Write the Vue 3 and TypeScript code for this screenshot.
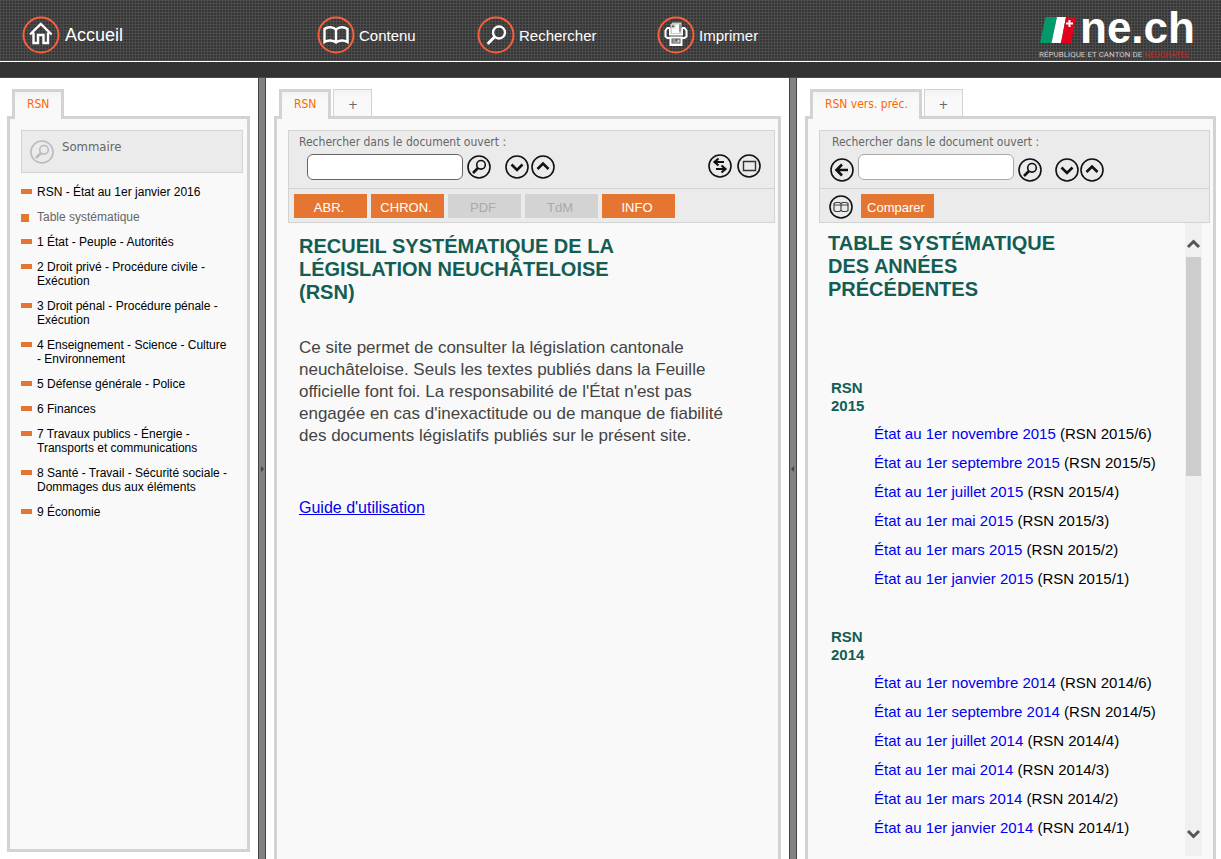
<script setup lang="ts">
import { ref } from 'vue'

interface TocEntry {
  label: string
  current?: boolean
}

interface Version {
  label: string
  code: string
}

interface VersionGroup {
  year: number
  versions: Version[]
}

const toc: TocEntry[] = [
  { label: 'RSN - État au 1er janvier 2016' },
  { label: 'Table systématique', current: true },
  { label: '1 État - Peuple - Autorités' },
  { label: '2 Droit privé - Procédure civile - Exécution' },
  { label: '3 Droit pénal - Procédure pénale - Exécution' },
  { label: '4 Enseignement - Science - Culture - Environnement' },
  { label: '5 Défense générale - Police' },
  { label: '6 Finances' },
  { label: '7 Travaux publics - Énergie - Transports et communications' },
  { label: '8 Santé - Travail - Sécurité sociale - Dommages dus aux éléments' },
  { label: '9 Économie' },
]

const months = ['novembre', 'septembre', 'juillet', 'mai', 'mars', 'janvier']

const groups: VersionGroup[] = [2015, 2014].map((year) => ({
  year,
  versions: months.map((month, i) => ({
    label: `État au 1er ${month} ${year}`,
    code: `(RSN ${year}/${months.length - i})`,
  })),
}))

const actions = [
  { label: 'ABR.', enabled: true },
  { label: 'CHRON.', enabled: true },
  { label: 'PDF', enabled: false },
  { label: 'TdM', enabled: false },
  { label: 'INFO', enabled: true },
]

const mainQuery = ref('')
const previousQuery = ref('')
</script>

<template>
  <div class="page">
    <header class="header">
      <nav class="nav">
        <a class="nav-item home" href="#">
          <svg class="nav-icon" viewBox="0 0 38 38" aria-hidden="true">
            <circle class="ring" cx="19" cy="19" r="17.5" />
            <path class="glyph" d="M8 18.5 18.8 8 29.6 18.5M11.5 16.5V27h4.500v-8h5.500v8h4.500V16.500" />
          </svg>
          <span>Accueil</span>
        </a>
        <a class="nav-item" href="#">
          <svg class="nav-icon" viewBox="0 0 38 38" aria-hidden="true">
            <circle class="ring" cx="19" cy="19" r="17.5" />
            <path class="glyph" d="M19 13.500C16 10.500 10.500 10.500 7.500 13v13c3.500-2.200 8.500-2 11.500.5 3-2.500 8-2.700 11.500-.5V13c-3-2.500-8.500-2.500-11.500.5zV26" />
          </svg>
          <span>Contenu</span>
        </a>
        <a class="nav-item" href="#">
          <svg class="nav-icon" viewBox="0 0 38 38" aria-hidden="true">
            <circle class="ring" cx="19" cy="19" r="17.5" />
            <circle class="glyph" cx="22" cy="16.500" r="6" />
            <path class="glyph thick" d="M17.500 21 11.500 27" />
          </svg>
          <span>Rechercher</span>
        </a>
        <a class="nav-item" href="#">
          <svg class="nav-icon" viewBox="0 0 38 38" aria-hidden="true">
            <circle class="ring" cx="19" cy="19" r="17.5" />
            <path class="glyph thin" d="M13 12h-2.500L8.500 14.500v6l2 1.500H13M25 12h2.500l2 2.500v6l-2 1.500H25M13 12v6.500h12v-6.500" />
            <path fill="#ccc" d="M15.500 6.500H24.500V18h-11V8.500z" />
            <path fill="#fff" d="M15 12.500h3.500V8.500H22V17h-7zM12.500 20.500h13V30h-13z" />
            <path fill="#555" d="M15 9.500h2v1.500h-2zM22.500 8.500h1v7h-1zM14.500 22.500h9v5h-9z" />
            <path fill="#ddd" d="M15.500 23.500h3v1h-3zM15.500 25.500h5v1h-5zM20.500 23.500h2v3h-2z" />
          </svg>
          <span>Imprimer</span>
        </a>
      </nav>
      <a class="logo" href="#" aria-label="ne.ch">
        <svg viewBox="0 0 160 61" width="160" height="61" aria-hidden="true">
          <path fill="#009a6c" d="M6.500 17H18L12.500 43H1z" />
          <path fill="#fff" d="M18 17H27L22 43H12.500z" />
          <path fill="#e2001a" d="M27 17H37L32 43H22z" />
          <path fill="#fff" d="M29.500 20h2v2.500H34v2h-2.500V27h-2v-2.500H27v-2h2.500z" />
          <text class="brand" x="41" y="43">ne.ch</text>
          <text class="motto" x="0" y="57">RÉPUBLIQUE ET CANTON DE <tspan fill="#c8281e">NEUCHÂTEL</tspan></text>
        </svg>
      </a>
    </header>
    <div class="strip"></div>

    <main class="workspace">
      <aside class="pane sidebar">
        <div class="tabs" role="tablist">
          <button class="tab active" role="tab" aria-selected="true">RSN</button>
        </div>
        <section class="panel closed">
          <div class="summary">
            <svg class="round muted" viewBox="0 0 24 24" aria-hidden="true">
              <circle cx="12" cy="12" r="11" />
              <circle cx="14" cy="9.800" r="4.300" />
              <path class="bold" d="M11 13 6 18" />
            </svg>
            <span>Sommaire</span>
          </div>
          <ul class="toc">
            <li v-for="entry in toc" :key="entry.label" :class="{ current: entry.current }">
              <a href="#">{{ entry.label }}</a>
            </li>
          </ul>
        </section>
      </aside>

      <div class="splitter"><span class="grip"></span></div>

      <section class="pane document">
        <div class="tabs" role="tablist">
          <button class="tab active" role="tab" aria-selected="true">RSN</button>
          <button class="tab add" aria-label="Ajouter un onglet">+</button>
        </div>
        <div class="panel">
          <div class="toolbar">
            <div class="search">
              <label for="main-query">Rechercher dans le document ouvert :</label>
              <div class="search-row">
                <input id="main-query" v-model="mainQuery" type="text" />
                <button class="icon-button" aria-label="Rechercher">
                  <svg class="round" viewBox="0 0 24 24">
                    <circle cx="12" cy="12" r="11" />
                    <circle cx="14" cy="9.800" r="4.300" />
                    <path class="bold" d="M11 13 6 18" />
                  </svg>
                </button>
                <span class="steps">
                  <button class="icon-button" aria-label="Suivant">
                    <svg class="round" viewBox="0 0 24 24"><circle cx="12" cy="12" r="11" /><path class="bold" d="M6.500 9.500 12 15 17.500 9.500" /></svg>
                  </button>
                  <button class="icon-button" aria-label="Précédent">
                    <svg class="round" viewBox="0 0 24 24"><circle cx="12" cy="12" r="11" /><path class="bold" d="M6.500 14 12 8.500 17.500 14" /></svg>
                  </button>
                </span>
                <span class="view">
                  <button class="icon-button" aria-label="Synchroniser">
                    <svg class="round" viewBox="0 0 24 24"><circle cx="12" cy="12" r="11" /><path class="arrow" d="M16 8H6.500M10.500 4.500 6.500 8l4 3.500M8 15H17.500M13.500 11.500l4 3.500-4 3.500" /></svg>
                  </button>
                  <button class="icon-button" aria-label="Agrandir">
                    <svg class="round" viewBox="0 0 24 24"><circle cx="12" cy="12" r="11" /><path class="frame" d="M6.500 7.500h12v9h-12z" /></svg>
                  </button>
                </span>
              </div>
            </div>
            <div class="actions">
              <button v-for="action in actions" :key="action.label" class="action" :disabled="!action.enabled">
                {{ action.label }}
              </button>
            </div>
          </div>
          <article class="intro">
            <h1>RECUEIL SYSTÉMATIQUE DE LA LÉGISLATION NEUCHÂTELOISE (RSN)</h1>
            <p>
              Ce site permet de consulter la législation cantonale neuchâteloise. Seuls les textes publiés dans la
              Feuille officielle font foi. La responsabilité de l'État n'est pas engagée en cas d'inexactitude ou de
              manque de fiabilité des documents législatifs publiés sur le présent site.
            </p>
            <a class="guide" href="#">Guide d'utilisation</a>
          </article>
        </div>
      </section>

      <div class="splitter"><span class="grip back"></span></div>

      <section class="pane previous">
        <div class="tabs" role="tablist">
          <button class="tab active" role="tab" aria-selected="true">RSN vers. préc.</button>
          <button class="tab add" aria-label="Ajouter un onglet">+</button>
        </div>
        <div class="panel">
          <div class="toolbar">
            <div class="search">
              <label for="previous-query">Rechercher dans le document ouvert :</label>
              <div class="search-row">
                <button class="icon-button back" aria-label="Retour">
                  <svg class="round" viewBox="0 0 24 24"><circle cx="12" cy="12" r="11" /><path class="bold" d="M18 12H7M12 6.500 6.500 12l5.500 5.500" /></svg>
                </button>
                <input id="previous-query" v-model="previousQuery" type="text" />
                <button class="icon-button" aria-label="Rechercher">
                  <svg class="round" viewBox="0 0 24 24">
                    <circle cx="12" cy="12" r="11" />
                    <circle cx="14" cy="9.800" r="4.300" />
                    <path class="bold" d="M11 13 6 18" />
                  </svg>
                </button>
                <span class="steps">
                  <button class="icon-button" aria-label="Suivant">
                    <svg class="round" viewBox="0 0 24 24"><circle cx="12" cy="12" r="11" /><path class="bold" d="M6.500 9.500 12 15 17.500 9.500" /></svg>
                  </button>
                  <button class="icon-button" aria-label="Précédent">
                    <svg class="round" viewBox="0 0 24 24"><circle cx="12" cy="12" r="11" /><path class="bold" d="M6.500 14 12 8.500 17.500 14" /></svg>
                  </button>
                </span>
              </div>
            </div>
            <div class="actions">
              <button class="icon-button" aria-label="Deux colonnes">
                <svg class="round" viewBox="0 0 24 24">
                  <circle cx="12" cy="12" r="11" />
                  <path class="fine" d="M6.500 7.500h4l1.500 1 1.500-1h4l1.500 1v7l-1.500 1h-4l-1.500-1-1.500 1h-4l-1.500-1v-7zM12 8.500v7M5 10h14" />
                </svg>
              </button>
              <button class="action">Comparer</button>
            </div>
          </div>
          <div class="scroll-area">
            <article class="history">
              <h1>TABLE SYSTÉMATIQUE DES ANNÉES PRÉCÉDENTES</h1>
              <section v-for="group in groups" :key="group.year" class="group">
                <h2>RSN<br />{{ group.year }}</h2>
                <ul>
                  <li v-for="version in group.versions" :key="version.code">
                    <a href="#">{{ version.label }}</a> {{ version.code }}
                  </li>
                </ul>
              </section>
            </article>
            <div class="scrollbar" aria-hidden="true">
              <svg viewBox="0 0 17 34"><path d="M3 24 8.500 18.500 14 24" /></svg>
              <span class="thumb"></span>
              <svg viewBox="0 0 17 34"><path d="M3 9 8.500 14.500 14 9" /></svg>
            </div>
          </div>
        </div>
      </section>
    </main>
  </div>
</template>

<style>
body {
  margin: 0;
  background: #fff;
}
</style>

<style scoped>
.page {
  display: flex;
  flex-direction: column;
  height: 100vh;
  overflow: hidden;
  font-family: "Liberation Sans", Arial, sans-serif;
  color: #000;
}

ul,
h1,
h2,
p {
  margin: 0;
  padding: 0;
}

ul {
  list-style: none;
}

button {
  margin: 0;
  padding: 0;
  border: 0;
  background: none;
  font-family: inherit;
  cursor: pointer;
}

.header {
  display: flex;
  justify-content: space-between;
  flex: none;
  height: 61px;
  padding: 0 22px;
  border-bottom: 1px solid #fff;
  background-color: #363636;
  background-image:
    linear-gradient(to right, #4c4c4c 1px, transparent 1px),
    linear-gradient(to bottom, #4c4c4c 1px, transparent 1px);
  background-size: 3px 3px;
}

.nav {
  display: grid;
  grid-template-columns: 295px 160px 180px auto;
  padding-top: 16px;
}

.nav-item {
  display: flex;
  align-items: center;
  gap: 4px;
  height: 38px;
  color: #fff;
  font-size: 15px;
  text-decoration: none;
}

.home {
  gap: 5px;
  font-size: 18px;
}

.nav-icon {
  width: 38px;
  height: 38px;
}

.ring {
  fill: none;
  stroke: #f9603a;
  stroke-width: 2;
}

.glyph {
  fill: none;
  stroke: #fff;
  stroke-width: 2.4;
}

.glyph.thick {
  stroke-width: 3;
  stroke-linecap: round;
}

.glyph.thin {
  stroke-width: 2;
}

.logo svg {
  display: block;
  overflow: visible;
}

.brand {
  fill: #fff;
  font-size: 44px;
  font-weight: bold;
}

.motto {
  fill: #ccc;
  font-family: Roboto, sans-serif;
  font-size: 8px;
}

.strip {
  flex: none;
  height: 15px;
  border-bottom: 1px solid #484848;
  background: #333;
}

.workspace {
  display: flex;
  flex: 1;
  min-height: 0;
}

.pane {
  display: flex;
  flex-direction: column;
  box-sizing: border-box;
  min-width: 0;
  padding: 11px 8px 0;
}

.sidebar {
  flex: none;
  width: 258px;
  padding: 11px 8px 7px 7px;
}

.document {
  flex: 523 1 0;
}

.previous {
  flex: 424 1 0;
  padding-right: 5px;
}

.splitter {
  display: flex;
  align-items: center;
  justify-content: center;
  flex: none;
  width: 6px;
  border: solid #444;
  border-width: 0 1px;
  background: #828282;
}

.grip {
  border: solid transparent;
  border-width: 3px 0 3px 3px;
  border-left-color: #444;
}

.grip.back {
  border-width: 3px 3px 3px 0;
  border-right-color: #444;
}

.tabs {
  display: flex;
  flex: none;
  gap: 2px;
  height: 27px;
  padding-left: 5px;
}

.tab {
  box-sizing: border-box;
  height: 27px;
  border: 1px solid #d3d3d3;
  border-bottom: 0;
  background: linear-gradient(#f3f3f3, #f9f9f9 8px);
  color: #666;
  font-family: "DejaVu Sans Condensed", "Noto Sans", sans-serif;
  font-size: 12px;
}

.tab.active {
  z-index: 1;
  height: 30px;
  padding: 0 12px 3px;
  border-width: 3px 3px 0;
  color: #ff6600;
}

.tab.add {
  width: 39px;
  padding-top: 2px;
  font-size: 13px;
}

.previous .tab.active {
  padding: 0 11px 3px 12px;
}

.panel {
  display: flex;
  flex-direction: column;
  flex: 1;
  min-height: 0;
  border: 3px solid #d3d3d3;
  border-bottom: 0;
  background: #f9f9f9;
}

.panel.closed {
  border-bottom: 3px solid #d3d3d3;
}

.summary {
  display: flex;
  box-sizing: border-box;
  gap: 8px;
  height: 43px;
  margin: 11px 4px 0 11px;
  padding: 9px 8px;
  border: 1px solid #d3d3d3;
  background: #ebebeb;
  color: #666;
  font-family: "DejaVu Sans Condensed", "Noto Sans", sans-serif;
  font-size: 13px;
  line-height: 14px;
}

.round {
  display: block;
  flex: none;
  width: 24px;
  height: 24px;
  fill: none;
  stroke: #111;
  stroke-width: 1.6;
}

.round .bold {
  stroke-width: 2.6;
}

.round .arrow {
  stroke-width: 2.2;
}

.round .frame {
  stroke: #333;
  stroke-width: 1.4;
}

.round .fine {
  stroke: #444;
  stroke-width: 1.2;
}

.round.muted {
  stroke: #bbb;
}

.toc {
  display: flex;
  flex-direction: column;
  gap: 11px;
  padding: 12px 15px 0 11px;
  font-size: 12px;
  line-height: 14px;
}

.toc li {
  display: flex;
}

.toc li::before {
  flex: none;
  width: 11px;
  height: 5px;
  margin: 4px 5px 0 0;
  background: #e57632;
  content: "";
}

.toc .current::before {
  width: 8px;
  height: 8px;
  margin-right: 8px;
}

.toc a {
  color: #000;
  text-decoration: none;
}

.toc .current a {
  color: #666;
}

.toolbar {
  flex: none;
  margin: 11px 3px 0 11px;
  border: 1px solid #d3d3d3;
  background: #ebebeb;
}

.search {
  box-sizing: border-box;
  height: 58px;
  padding: 3px 13px 0 10px;
  border-bottom: 1px solid #d3d3d3;
}

.search label {
  display: block;
  margin-bottom: 4px;
  color: #666;
  font-family: "DejaVu Sans Condensed", "Noto Sans", sans-serif;
  font-size: 12px;
  line-height: 16px;
}

.search-row {
  display: flex;
  align-items: center;
  gap: 4px;
  padding-left: 8px;
}

.search input {
  box-sizing: border-box;
  width: 156px;
  height: 26px;
  padding: 0 6px;
  border: 1px solid #666;
  border-radius: 6px;
  background: #fff;
}

.steps {
  display: flex;
  gap: 2px;
  margin-left: 10px;
}

.view {
  display: flex;
  align-self: flex-start;
  gap: 5px;
  margin-left: auto;
}

.actions {
  display: flex;
  gap: 4px;
  padding: 5px 5px 4px;
}

.action {
  width: 73px;
  height: 24px;
  padding: 2px 3px 0 0;
  background: #e57632;
  color: #fff;
  font-size: 13px;
}

.action:disabled {
  background: #d3d3d3;
  color: #aaa;
  cursor: default;
}

.previous .search {
  padding-left: 12px;
}

.previous .search-row {
  align-items: flex-end;
  height: 28px;
  padding: 0;
}

.previous .search-row input {
  align-self: flex-start;
  border-color: #aaa;
}

.previous .steps {
  gap: 1px;
  margin-left: 9px;
}

.previous .back {
  margin-left: -2px;
}

.previous .actions {
  gap: 8px;
  padding-left: 9px;
}

.previous .actions .icon-button {
  height: 24px;
  padding-top: 1px;
}

h1 {
  color: #135d55;
  font-size: 20px;
  line-height: 23px;
}

.intro {
  padding: 12px 22px 0;
}

.intro h1 {
  max-width: 330px;
}

.intro p {
  max-width: 445px;
  margin: 33px 0 50px;
  color: #444;
  font-size: 17px;
  line-height: 22px;
}

.guide {
  color: #0000ee;
  font-size: 16px;
  line-height: 22px;
}

.scroll-area {
  display: flex;
  flex: 1;
  min-height: 0;
  margin: 0 11px 3px 20px;
}

.history {
  flex: 1;
  min-width: 0;
  padding-top: 9px;
  overflow: hidden;
}

.history h1 {
  max-width: 240px;
}

.group {
  padding-left: 3px;
  margin-bottom: 35px;
}

.history h1 + .group {
  margin-top: 78px;
}

.group h2 {
  margin-bottom: 4px;
  color: #135d55;
  font-size: 15px;
  line-height: 18px;
}

.group ul {
  padding-left: 43px;
  font-size: 15px;
  line-height: 29px;
}

.group a {
  color: #0000ee;
  text-decoration: none;
}

.scrollbar {
  display: flex;
  flex-direction: column;
  flex: none;
  width: 17px;
  background: #f0f0f0;
}

.scrollbar svg {
  flex: none;
  width: 17px;
  height: 34px;
  fill: none;
  stroke: #555;
  stroke-width: 3;
}

.thumb {
  height: 219px;
  margin: 0 1px auto;
  background: #cdcdcd;
}
</style>
